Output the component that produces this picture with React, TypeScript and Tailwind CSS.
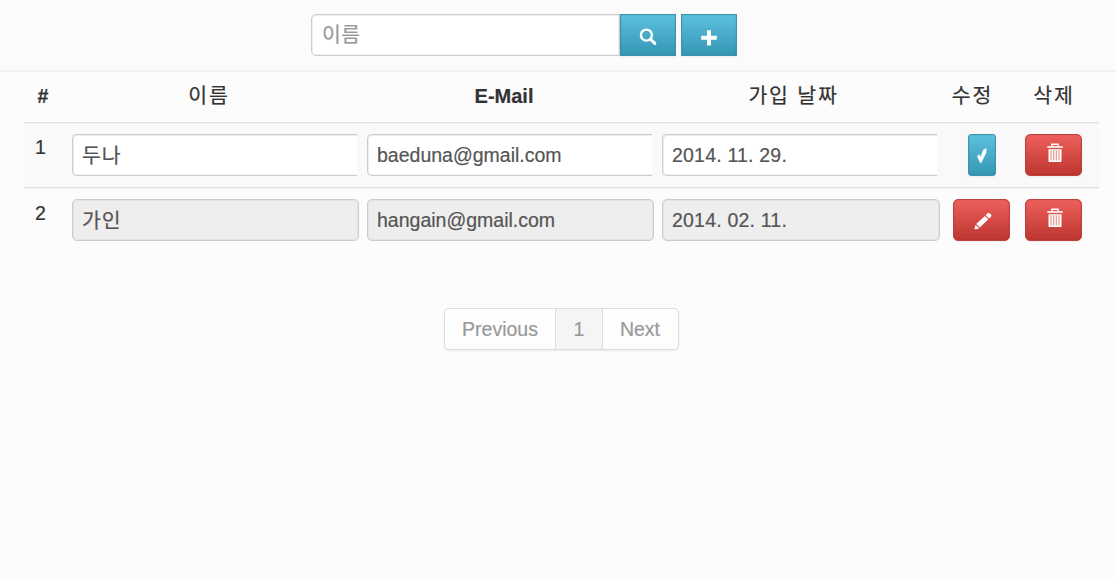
import type { ReactNode } from "react";

const FONT = "font-['Liberation_Sans','Noto_Sans_CJK_KR',sans-serif]";

function SearchIcon() {
  return (
    <svg width="18" height="18" viewBox="0 0 18 18" className="block">
      <circle cx="7.4" cy="7.1" r="5.5" fill="none" stroke="#fff" strokeWidth="2.4" />
      <path d="M11.4 11.1L15.8 15.4" stroke="#fff" strokeWidth="3" strokeLinecap="round" />
    </svg>
  );
}

function PlusIcon() {
  return (
    <svg width="16" height="16" viewBox="0 0 16 16" className="block">
      <path d="M6 0.2h4v5.6H15.8v4H10v5.6H6V9.8H0.2V5.8H6z" fill="#fff" />
    </svg>
  );
}

function CheckIcon() {
  return (
    <svg width="10" height="16" viewBox="0 0 10 16" className="block">
      <path d="M0.3 8.4L1.9 6.5L3.6 9L6.6 1.6L9.2 0.4V4.6L4.3 14.6H3.1z" fill="#fff" stroke="#fff" strokeWidth="0.4" />
    </svg>
  );
}

function TrashIcon() {
  return (
    <svg width="16" height="20" viewBox="0 0 16 20" className="block">
      <path d="M4.9 3.2V1.3H11.1V3.2" fill="none" stroke="#fff" strokeWidth="1.4" />
      <path d="M0.3 3.2H15.7V4.8H0.3z" fill="#fff" />
      <path d="M1.5 6.2H14.5V18.2Q14.5 19 13.7 19H2.3Q1.5 19 1.5 18.2z" fill="#fff" />
      <path d="M4 7.2V17.4M6.7 7.2V17.4M9.3 7.2V17.4M12 7.2V17.4" stroke="#e48a88" strokeWidth="1.1" />
    </svg>
  );
}

function PencilIcon() {
  return (
    <svg width="18" height="18" viewBox="0 0 18 18" className="block" fill="#fff">
      <path d="M0.4 17.2L1.5 12.9L5.3 16.3Q3 17.4 0.4 17.2z" />
      <path d="M2.2 12L10.9 3.9L14.3 7.3L5.9 15.4z" />
      <path d="M11.7 3.2L13.5 1.3Q14.6 0.4 15.9 1.5L17 2.6Q17.9 3.6 17 4.7L15.1 6.6z" />
    </svg>
  );
}

function Button({ tone, className, label, children }: { tone: "info" | "danger"; className: string; label: string; children: ReactNode }) {
  const tones = {
    info: "border-[#3f95b0] bg-linear-to-b from-[#5bc0de] to-[#3497b4]",
    danger: "border-[#bd403d] bg-linear-to-b from-[#ee5f5b] to-[#bd362f]",
  };
  return (
    <button
      aria-label={label}
      className={`flex h-[42px] shrink-0 items-center justify-center border shadow-[inset_0_0_0_1px_rgba(0,0,0,0.04),0_1px_2px_rgba(0,0,0,0.06)] ${tones[tone]} ${className}`}
    >
      {children}
    </button>
  );
}

function Field({ value, editing, label, className }: { value: string; editing: boolean; label: string; className: string }) {
  return (
    <input
      aria-label={label}
      readOnly={!editing}
      defaultValue={value}
      className={`block h-[42px] w-full border border-[#cccccc] px-[9px] leading-7 text-[#555] outline-none ${className} ${
        editing
          ? "rounded-l-[5px] border-r-0 bg-white shadow-[inset_1px_1px_0_rgba(0,0,0,0.07),inset_0_-1px_0_rgba(0,0,0,0.05)]"
          : "rounded-[5px] bg-[#eeeeee] shadow-[inset_0_0_0_1px_rgba(0,0,0,0.04)]"
      }`}
    />
  );
}

const COLUMNS = "grid grid-cols-[44px_295px_295px_286px_73px_82px]";

const people = [
  { id: 1, name: "두나", email: "baeduna@gmail.com", joined: "2014. 11. 29.", editing: true },
  { id: 2, name: "가인", email: "hangain@gmail.com", joined: "2014. 02. 11.", editing: false },
];

export default function App() {
  return (
    <div className={`h-[580px] w-[1116px] overflow-hidden bg-[#fcfcfc] text-[19.5px] leading-7 text-[#333] [-webkit-text-stroke:0.2px_currentColor] ${FONT}`}>
      <header className="flex h-[72px] border-b-2 border-[#f2f2f2] bg-[#fbfbfb] pt-3.5 pl-[311px]">
        <input
          aria-label="이름"
          placeholder="이름"
          className="h-[42px] w-[309px] rounded-l-[5px] border border-[#cccccc] bg-white px-2.5 text-[20.5px] tracking-[0.4px] shadow-[inset_1px_1px_0_rgba(0,0,0,0.07),inset_-1px_-1px_0_rgba(0,0,0,0.05)] outline-none placeholder:text-[#999]"
        />
        <Button tone="info" label="검색" className="w-14 pt-1 pr-0.5 pl-px">
          <SearchIcon />
        </Button>
        <Button tone="info" label="추가" className="ml-[5px] w-14 pt-1.5">
          <PlusIcon />
        </Button>
      </header>

      <main className="ml-6 w-[1075px]">
        <div className={`${COLUMNS} h-[50px] pt-[10px] text-center font-bold`}>
          <div className="pr-[6px]">#</div>
          <div className="pr-[13px] text-[20.5px] font-normal tracking-[1.8px]">이름</div>
          <div className="pr-[13px] text-[20px]">E-Mail</div>
          <div className="pr-[15px] text-[20.5px] font-normal tracking-[1.8px]">가입 날짜</div>
          <div className="pr-[16px] text-[20.5px] font-normal tracking-[1.8px] whitespace-nowrap">수정</div>
          <div className="pr-[8px] text-[20.5px] font-normal tracking-[1.8px] whitespace-nowrap">삭제</div>
        </div>

        {people.map((p) => (
          <div
            key={p.id}
            className={`${COLUMNS} border-t border-[#dddddd] pt-[11px] shadow-[inset_0_1px_0_rgba(0,0,0,0.03)] ${p.editing ? "h-[65px] bg-[#f9f9f9]" : "h-[66px]"}`}
          >
            <div className={p.editing ? "-mt-px pl-[11px]" : "pl-[11px]"}>{p.id}</div>
            <div className={p.editing ? "pr-[6px] pl-[4px]" : "pr-[4px] pl-[4px]"}>
              <Field label="이름" value={p.name} editing={p.editing} className="pb-[3px] text-[20.5px] tracking-[1px]" />
            </div>
            <div className={p.editing ? "pr-[6px] pl-[4px]" : "pr-[4px] pl-[4px]"}>
              <Field label="E-Mail" value={p.email} editing={p.editing} className="pt-px text-[19.5px]" />
            </div>
            <div className={p.editing ? "pr-[7px] pl-[4px]" : "pr-[4px] pl-[4px]"}>
              <Field label="가입 날짜" value={p.joined} editing={p.editing} className="pt-px text-[19.5px] tracking-[0.2px]" />
            </div>
            <div className="flex justify-center pl-0.5">
              {p.editing ? (
                <Button tone="info" label="저장" className="w-7 rounded-[3px] pt-0.5">
                  <CheckIcon />
                </Button>
              ) : (
                <Button tone="danger" label="수정" className="w-[57px] rounded-[5px] pt-0.5 pl-0.5">
                  <PencilIcon />
                </Button>
              )}
            </div>
            <div className="flex pl-2">
              <Button tone="danger" label="삭제" className="w-[57px] rounded-[5px] pb-1 pl-[3px]">
                <TrashIcon />
              </Button>
            </div>
          </div>
        ))}
      </main>

      <nav className="mt-[55px] ml-[444px] flex h-[42px] w-[235px] rounded-[5px] border border-[#dddddd] bg-[#fdfdfd] leading-10 text-[#999] shadow-[0_1px_2px_rgba(0,0,0,0.08)]">
        <span className="w-[111px] border-r border-[#dddddd] text-center">Previous</span>
        <span className="w-[47px] border-r border-[#dddddd] bg-[#f5f5f5] text-center">1</span>
        <span className="w-[75px] pr-px text-center">Next</span>
      </nav>
    </div>
  );
}
